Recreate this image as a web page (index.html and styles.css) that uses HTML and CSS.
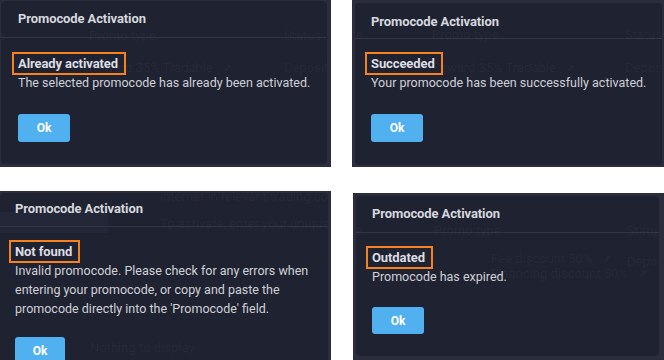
FILE: index.html
```html
<!DOCTYPE html>
<html>
<head>
<meta charset="utf-8">
<link rel="stylesheet" href="styles.css">
</head>
<body>
<div class="sheet">
  <section class="panel panel-tl">
    <div class="dialog">
      <div class="ghost">
        <span class="g-line" style="top:36px"></span>
        <span class="g-text" style="left:-22px;top:27px">Date</span>
        <span class="g-text" style="left:88px;top:27px">Promo type</span>
        <span class="g-text" style="left:283px;top:27px">Status</span>
        <span class="g-text" style="left:88px;top:59px">Reward 35% Tradable <span class="g-icon">&#8599;</span></span>
        <span class="g-text" style="left:283px;top:59px">Deposit u</span>
      </div>
      <div class="content">
        <h2 class="title">Promocode Activation</h2>
        <div class="mark"><h3 class="heading">Already activated</h3></div>
        <p class="msg">The selected promocode has already been activated.</p>
        <button class="ok">Ok</button>
      </div>
    </div>
  </section>

  <section class="panel panel-tr">
    <div class="dialog">
      <div class="ghost">
        <span class="g-line" style="top:35px"></span>
        <span class="g-text" style="left:-19px;top:24px">Date</span>
        <span class="g-text" style="left:77px;top:24px">Promo type</span>
        <span class="g-text" style="left:270px;top:24px">Status</span>
        <span class="g-text" style="left:77px;top:57px">Reward 35% Tradable <span class="g-icon">&#8599;</span></span>
        <span class="g-text" style="left:270px;top:57px">Deposit</span>
      </div>
      <div class="content">
        <h2 class="title">Promocode Activation</h2>
        <div class="mark"><h3 class="heading">Succeeded</h3></div>
        <p class="msg">Your promocode has been successfully activated.</p>
        <button class="ok">Ok</button>
      </div>
    </div>
  </section>

  <section class="panel panel-bl">
    <div class="dialog">
      <div class="ghost">
        <span class="g-rect"></span>
        <span class="g-line" style="top:33px"></span>
        <span class="g-text" style="left:160px;top:-4px">internet in relevant trading com</span>
        <span class="g-text" style="left:160px;top:23px">To activate, enter your unique p</span>
        <span class="g-text" style="left:90px;top:147px">Nothing to display</span>
      </div>
      <div class="content">
        <h2 class="title">Promocode Activation</h2>
        <div class="mark"><h3 class="heading">Not found</h3></div>
        <p class="msg">Invalid promocode. Please check for any errors when entering your promocode, or copy and paste the promocode directly into the 'Promocode' field.</p>
        <button class="ok">Ok</button>
      </div>
    </div>
  </section>

  <section class="panel panel-br">
    <div class="dialog">
      <div class="ghost">
        <span class="g-line" style="top:36px"></span>
        <span class="g-text" style="left:-20px;top:27px">Date</span>
        <span class="g-text" style="left:78px;top:27px">Promo type</span>
        <span class="g-text" style="left:271px;top:27px">Status</span>
        <span class="g-text" style="left:135px;top:55px">Fee discount 50% <span class="g-icon">&#8599;</span></span>
        <span class="g-text" style="left:135px;top:70px">Financing discount 50% <span class="g-icon">&#8599;</span></span>
        <span class="g-text" style="left:271px;top:58px">Deposit</span>
      </div>
      <div class="content">
        <h2 class="title">Promocode Activation</h2>
        <div class="mark"><h3 class="heading">Outdated</h3></div>
        <p class="msg">Promocode has expired.</p>
        <button class="ok">Ok</button>
      </div>
    </div>
  </section>
</div>
</body>
</html>
```

FILE: styles.css
```css
* { box-sizing: border-box; }

html, body {
  margin: 0;
  padding: 0;
  background: #ffffff;
}

body {
  width: 664px;
  height: 360px;
  overflow: hidden;
  font-family: "Roboto", "Liberation Sans", sans-serif;
}

.sheet {
  display: grid;
  grid-template-columns: 331px 312px;
  grid-template-rows: 167px 169px;
  column-gap: 21px;
  row-gap: 24px;
}

.panel {
  display: flex;
  background: #2b2d3c;
  overflow: hidden;
}

.panel-tl { padding: 1px 4px 3px 1px; }
.panel-tr { padding: 3px 2px 2px 3px; }
.panel-bl { padding: 2px 3px 0 0; align-items: flex-start; }
.panel-br { padding: 3px 5px 4px 3px; margin: 2px 0 0 1px; height: 167px; }

.dialog {
  position: relative;
  flex: 1;
  background: #1f2231;
  border-radius: 4px;
  overflow: hidden;
}

.ghost {
  position: absolute;
  inset: 0;
}

.g-text {
  position: absolute;
  font-size: 13px;
  line-height: 16px;
  white-space: nowrap;
  color: rgba(255, 255, 255, 0.045);
}

.g-icon {
  display: inline-block;
  margin-left: 6px;
  font-size: 12px;
}

.g-line {
  position: absolute;
  left: 0;
  right: 0;
  height: 1px;
  background: #323548;
}

.g-rect {
  position: absolute;
  left: 0;
  top: 19px;
  width: 108px;
  height: 21px;
  background: #232737;
}

.content {
  position: relative;
  display: flex;
  flex-direction: column;
  align-items: flex-start;
  padding: 8px 2px 22px 17px;
}

.panel-tr .content { padding: 9px 2px 22px 16px; }
.panel-bl .content { padding: 6px 2px 0 15px; }
.panel-br .content { padding: 8px 2px 22px 16px; }

.title {
  margin: 0;
  font-size: 13px;
  line-height: 19px;
  font-weight: 700;
  letter-spacing: -0.1px;
  color: #d6d8de;
}

.mark {
  margin: 24px 0 -2px -6px;
  padding: 0 6px 0 4px;
  border: 2px solid #f5821f;
}

.panel-tr .mark { margin-top: 21px; }
.panel-bl .mark { margin-top: 22px; }
.panel-br .mark { margin-top: 23px; }

.heading {
  margin: 0;
  font-size: 13px;
  line-height: 19px;
  font-weight: 700;
  letter-spacing: -0.1px;
  color: #dcdee3;
}

.msg {
  margin: 0;
  font-size: 12.5px;
  line-height: 19px;
  color: #cfd1d7;
}

.ok {
  margin-top: 22px;
  width: 52px;
  height: 28px;
  border: 0;
  border-radius: 3px;
  background: #51b0ef;
  color: #ffffff;
  font-family: "Roboto", "Liberation Sans", sans-serif;
  font-size: 12px;
  font-weight: 700;
  padding: 0;
}

.panel-bl .ok { margin-top: 19px; width: 50px; }
.panel-br .ok { margin-top: 21px; height: 27px; }
```
